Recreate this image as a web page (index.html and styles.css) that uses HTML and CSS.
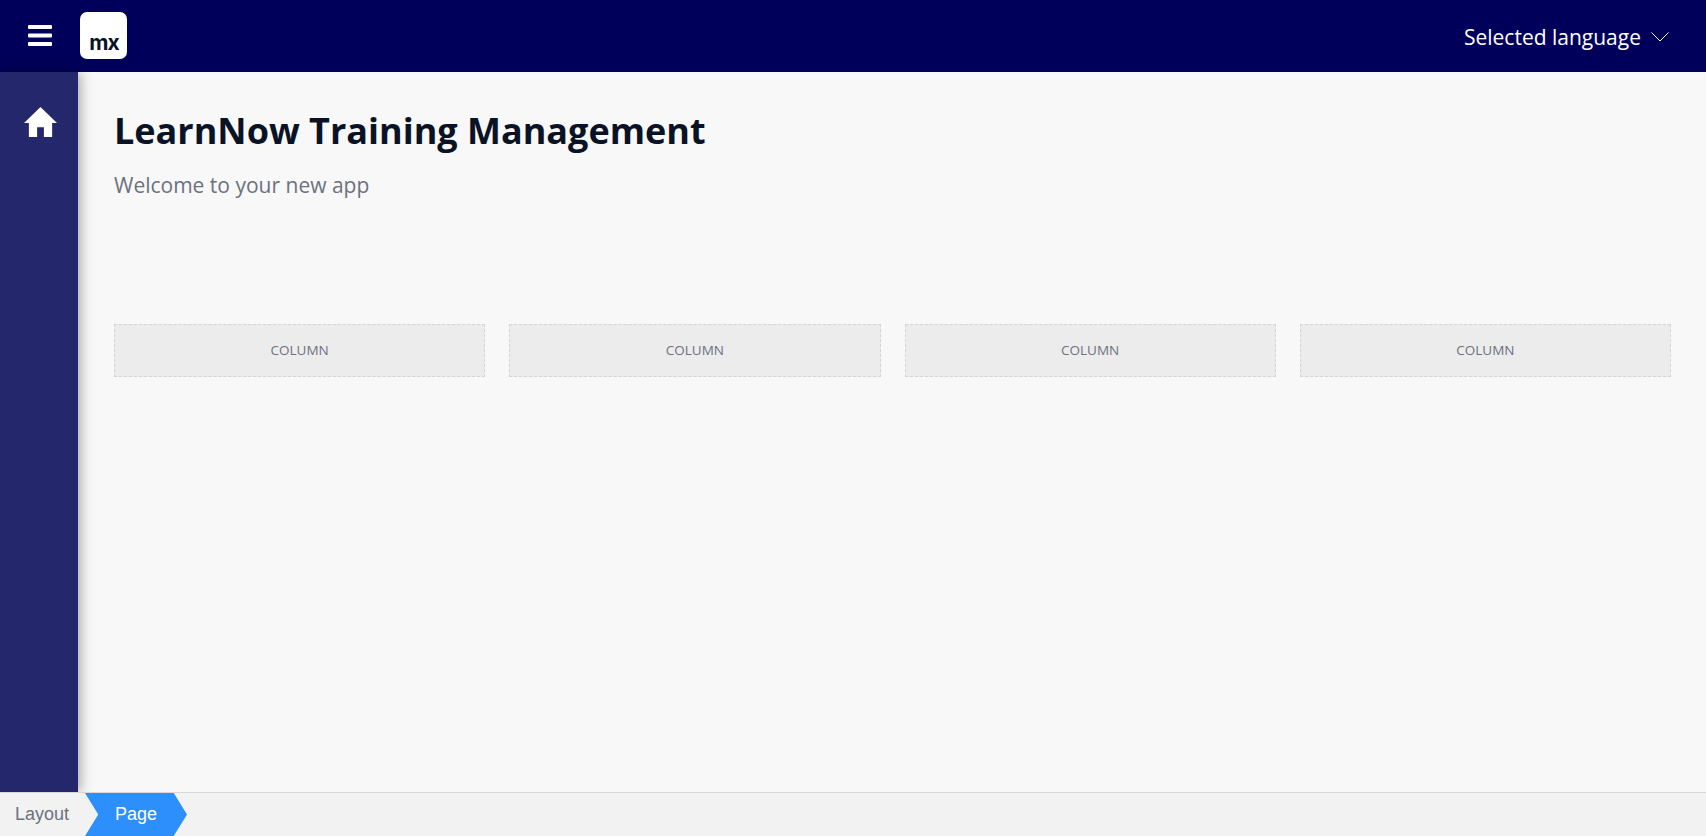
FILE: index.html
```html
<!DOCTYPE html>
<html lang="en">
<head>
<meta charset="utf-8">
<title>LearnNow Training Management</title>
<link rel="stylesheet" href="styles.css">
</head>
<body>
<div class="app">
  <header class="topbar">
    <div class="brand">
      <button class="burger" aria-label="Menu">
        <svg width="24" height="21" viewBox="0 0 24 21"><path d="M0 1a1 1 0 0 1 1-1h22a1 1 0 0 1 1 1v2a1 1 0 0 1-1 1H1a1 1 0 0 1-1-1zM0 9.500a1 1 0 0 1 1-1h22a1 1 0 0 1 1 1v2a1 1 0 0 1-1 1H1a1 1 0 0 1-1-1zM0 18a1 1 0 0 1 1-1h22a1 1 0 0 1 1 1v2a1 1 0 0 1-1 1H1a1 1 0 0 1-1-1z" fill="#fff"/></svg>
      </button>
      <div class="logo"><span>mx</span></div>
    </div>
    <div class="lang">
      <span>Selected language</span>
      <svg width="18" height="10" viewBox="0 0 18 10"><path d="M.5.500 9 9 17.500.500" fill="none" stroke="#fff" stroke-width="1"/></svg>
    </div>
  </header>
  <div class="middle">
    <nav class="sidebar">
      <svg width="33" height="31" viewBox="0 0 34 32"><path d="M17 0 34 16.500H29V31H20.500V21H13.500V31H5V16.500H0z" fill="#fff"/></svg>
    </nav>
    <main class="content">
      <h1 class="title">LearnNow Training Management</h1>
      <p class="subtitle">Welcome to your new app</p>
      <div class="columns">
        <div class="col">COLUMN</div>
        <div class="col">COLUMN</div>
        <div class="col">COLUMN</div>
        <div class="col">COLUMN</div>
      </div>
    </main>
  </div>
  <footer class="crumbs">
    <span class="crumb">Layout</span>
    <span class="crumb-active">Page</span>
  </footer>
</div>
</body>
</html>
```
FILE: styles.css
```css
* { box-sizing: border-box; }
html, body { margin: 0; height: 100%; overflow: hidden; }
body { font-family: "Open Sans", sans-serif; background: #f8f8f8; }
.app { display: flex; flex-direction: column; height: 836px; }
.topbar {
  height: 72px;
  background: #00005a;
  display: flex;
  align-items: center;
  justify-content: space-between;
  padding-right: 37px;
  flex: none;
}
.brand { display: flex; align-items: center; }
.burger {
  width: 80px;
  height: 72px;
  padding: 0 0 1px 0;
  border: 0;
  background: none;
  display: flex;
  align-items: center;
  justify-content: center;
}
.logo {
  width: 47px;
  height: 47px;
  margin-top: -1px;
  background: #fff;
  border-radius: 7px;
  display: flex;
  align-items: flex-end;
  justify-content: center;
  font-family: "Inter", sans-serif;
  font-weight: 700;
  font-size: 21px;
  line-height: 24px;
  letter-spacing: -1px;
  color: #0a1326;
  padding: 0 0 4px 1px;
}
.lang {
  display: flex;
  align-items: center;
  gap: 10px;
  padding-top: 2px;
  color: #fff;
  font-size: 21px;
}
.middle { flex: 1; display: flex; min-height: 0; }
.sidebar {
  width: 78px;
  flex: none;
  background: #24276c;
  box-shadow: 2px 0 12px rgba(0, 0, 0, 0.35);
  padding: 35px 0 0 3px;
  display: flex;
  justify-content: center;
  align-items: flex-start;
}
.content { flex: 1; padding: 36px 35px 0 36px; min-width: 0; }
.title {
  margin: 0;
  font-size: 36px;
  line-height: 46px;
  font-weight: 700;
  color: #0a1326;
}
.subtitle {
  margin: 16px 0 0;
  font-size: 21px;
  line-height: 30px;
  color: #6c717e;
}
.columns {
  margin-top: 124px;
  display: grid;
  grid-template-columns: repeat(4, 1fr);
  gap: 24px;
}
.col {
  height: 53px;
  padding-bottom: 2px;
  background: #ececec;
  border: 1px dashed #d4d4d4;
  display: flex;
  align-items: center;
  justify-content: center;
  font-size: 13.500px;
  color: #6c717e;
}
.crumbs {
  height: 44px;
  flex: none;
  display: flex;
  align-items: stretch;
  background: #f2f2f2;
  border-top: 1px solid #d8d8d8;
  font-family: "Liberation Sans", sans-serif;
  font-size: 18px;
}
.crumb {
  width: 85px;
  padding-left: 15px;
  display: flex;
  align-items: center;
  color: #6c717e;
}
.crumb-active {
  width: 102px;
  padding-left: 30px;
  display: flex;
  align-items: center;
  color: #fff;
  background: #2d8ffb;
  clip-path: polygon(0 0, 87% 0, 100% 50%, 87% 100%, 0 100%, 13% 50%);
}
```
